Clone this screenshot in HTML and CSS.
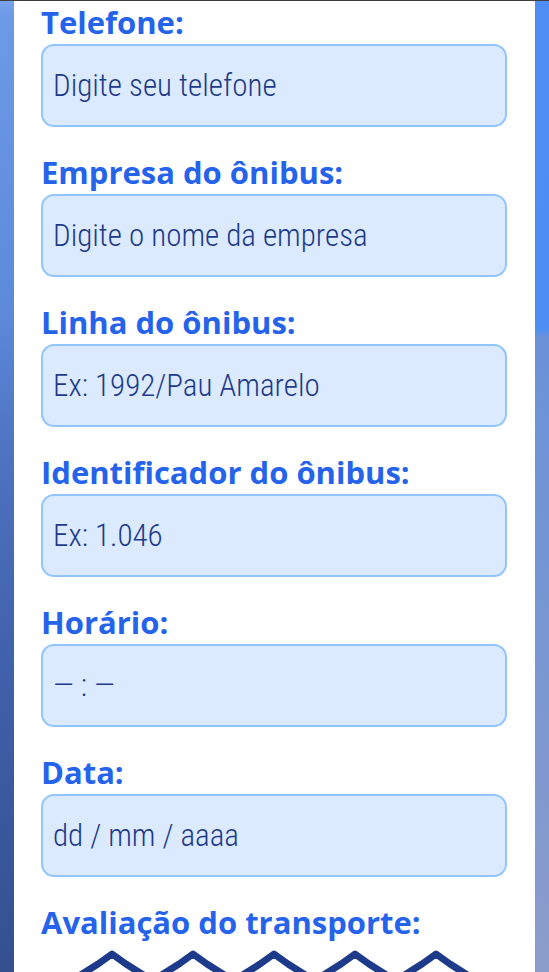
FILE: index.html
```html
<!DOCTYPE html>
<html lang="pt-BR">
<head>
<meta charset="utf-8">
<title>Formulário</title>
<link rel="stylesheet" href="styles.css">
</head>
<body>
<div class="screen">
  <div class="strip strip-left"></div>
  <main class="card">
    <form class="form">
      <div class="field">
        <label class="label" for="tel">Telefone:</label>
        <input class="input" id="tel" type="text" placeholder="Digite seu telefone">
      </div>
      <div class="field">
        <label class="label" for="emp">Empresa do ônibus:</label>
        <input class="input" id="emp" type="text" placeholder="Digite o nome da empresa">
      </div>
      <div class="field">
        <label class="label" for="lin">Linha do ônibus:</label>
        <input class="input" id="lin" type="text" placeholder="Ex: 1992/Pau Amarelo">
      </div>
      <div class="field">
        <label class="label" for="ide">Identificador do ônibus:</label>
        <input class="input" id="ide" type="text" placeholder="Ex: 1.046">
      </div>
      <div class="field">
        <label class="label" for="hor">Horário:</label>
        <input class="input" id="hor" type="text" placeholder="— : —">
      </div>
      <div class="field">
        <label class="label" for="dat">Data:</label>
        <input class="input" id="dat" type="text" placeholder="dd / mm / aaaa">
      </div>
      <div class="field">
        <span class="label">Avaliação do transporte:</span>
        <div class="stars">
          <svg class="star" viewBox="0 0 76 66" width="76" height="66"><polygon points="38,5 24,15 5,27 18,39 14,60 38,49 62,60 58,39 71,27 52,15"/></svg>
          <svg class="star" viewBox="0 0 76 66" width="76" height="66"><polygon points="38,5 24,15 5,27 18,39 14,60 38,49 62,60 58,39 71,27 52,15"/></svg>
          <svg class="star" viewBox="0 0 76 66" width="76" height="66"><polygon points="38,5 24,15 5,27 18,39 14,60 38,49 62,60 58,39 71,27 52,15"/></svg>
          <svg class="star" viewBox="0 0 76 66" width="76" height="66"><polygon points="38,5 24,15 5,27 18,39 14,60 38,49 62,60 58,39 71,27 52,15"/></svg>
          <svg class="star" viewBox="0 0 76 66" width="76" height="66"><polygon points="38,5 24,15 5,27 18,39 14,60 38,49 62,60 58,39 71,27 52,15"/></svg>
        </div>
      </div>
    </form>
  </main>
  <div class="strip strip-right"></div>
</div>
</body>
</html>
```
FILE: styles.css
```css
html, body {
  margin: 0;
  padding: 0;
}

body {
  font-family: "Open Sans", "Liberation Sans", sans-serif;
  background: #ffffff;
}

.screen {
  display: grid;
  grid-template-columns: 14px 1fr 14px;
  height: 972px;
  overflow: hidden;
  border-top: 1px solid #3f3f3f;
  box-sizing: border-box;
}

.strip-left {
  background: linear-gradient(to bottom,
    #79a4ec 0px, #6b9ae6 14px, #5d8bdc 300px, #4d72c0 460px,
    #3e5ea8 700px, #34508f 972px);
}

.strip-right {
  background: linear-gradient(to bottom,
    #4f8ff5 0px, #4e8ef3 328px, #6a92d9 336px, #7696d2 600px,
    #8b9dca 972px);
}

.card {
  background: #ffffff;
  padding: 1px 28px 0 27px;
}

.form {
  display: flex;
  flex-direction: column;
  gap: 25px;
}

.field {
  display: flex;
  flex-direction: column;
}

.label {
  display: block;
  font-family: "Open Sans", "Liberation Sans", sans-serif;
  font-weight: 700;
  font-size: 31px;
  line-height: 40px;
  color: #2563eb;
  margin-bottom: 2px;
}

.input {
  box-sizing: border-box;
  width: 100%;
  height: 83px;
  margin: 0;
  padding: 0 10px;
  border: 2px solid #93c5fd;
  border-radius: 13px;
  background: #dbeafe;
  font-family: Roboto, "Liberation Sans", sans-serif;
  font-weight: 300;
  font-size: 31px;
  font-stretch: 85%;
  color: #1e3a8a;
  outline: none;
}

.input::placeholder {
  color: #1e3a8a;
  opacity: 1;
}

.stars {
  display: flex;
  justify-content: center;
  gap: 5px;
  margin-top: 5px;
}

.star {
  display: block;
  flex: none;
}

.star polygon {
  fill: none;
  stroke: #1e3a8a;
  stroke-width: 7;
  stroke-linejoin: round;
}
```
